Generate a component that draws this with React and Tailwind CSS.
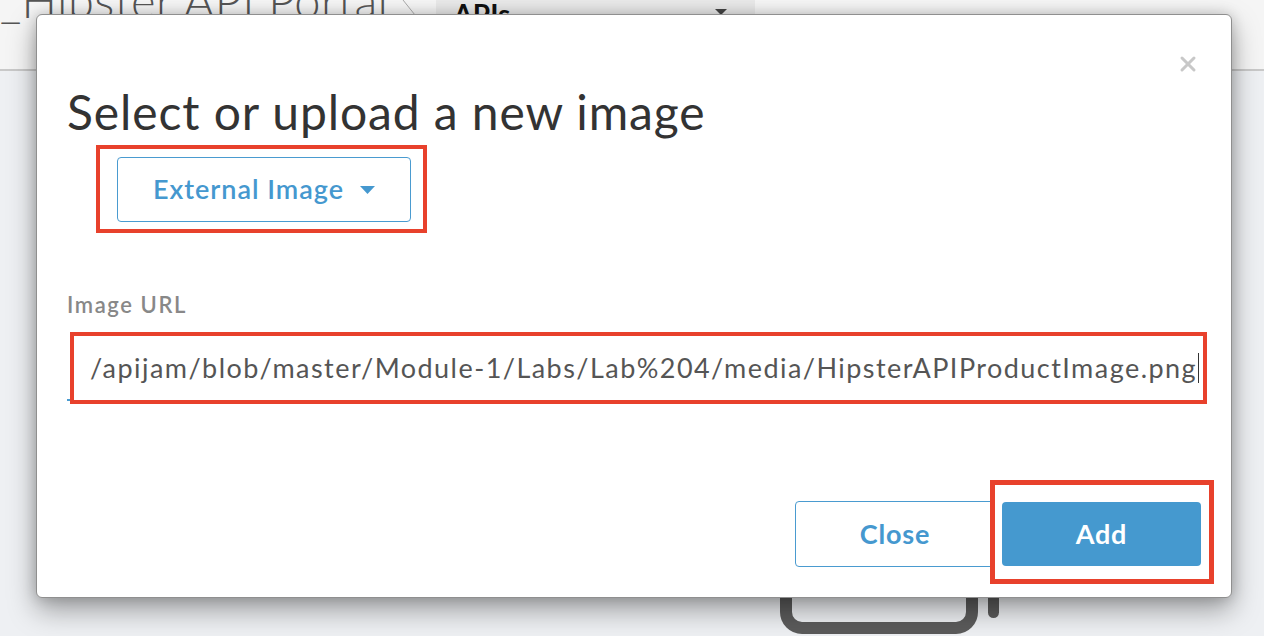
import { X } from "lucide-react";

export default function App() {
  return (
    <div className="relative h-[636px] w-[1264px] overflow-hidden bg-[#eef0f3] font-['Lato','Liberation_Sans',sans-serif]">
      {/* page behind the dialog */}
      <header className="flex h-[71px] items-start border-b-2 border-[#c9c9c9] bg-[#f5f5f5]">
        <div className="mt-[-28px] text-[47px] font-light leading-[56px] tracking-[0.4px] text-[#555]">
          _Hipster API Portal
        </div>
        <div className="ml-[14px] h-[16px] w-[14px]">
          <svg width="14" height="16" viewBox="0 0 14 16">
            <path d="M1 0 L13 15" stroke="#aaa" strokeWidth="1" fill="none" />
          </svg>
        </div>
        <div className="ml-[20px] flex h-[40px] w-[319px] items-start justify-between bg-[#e9e9e9] pl-[17px] pr-[28px]">
          <span className="mt-[-7px] text-[28px] font-bold text-[#111]">APIs</span>
          <svg className="mt-[9px]" width="12" height="6" viewBox="0 0 12 6">
            <path d="M0 0 H12 L6 6 Z" fill="#444" />
          </svg>
        </div>
      </header>

      <svg className="absolute left-[780px] top-[560px]" width="222" height="80" viewBox="0 0 222 80">
        <rect x="6" y="-20" width="186" height="88" rx="16" fill="none" stroke="#5b5b5b" strokeWidth="12" />
        <rect x="208" y="20" width="11" height="38" rx="5.5" fill="#5b5b5b" />
      </svg>

      {/* dialog */}
      <div className="absolute left-[36px] top-[14px] flex h-[584px] w-[1196px] flex-col rounded-[6px] border border-[#8f8f8f] bg-white pl-[30px] shadow-[0_12px_28px_rgba(0,0,0,0.35),0_0_14px_rgba(0,0,0,0.18)]">
        <button className="absolute right-[31px] top-[37px] text-[#c8c8c8]">
          <X size={24} strokeWidth={3} />
        </button>

        <h1 className="mt-[70px] text-[48px] font-normal leading-[53px] tracking-[0.9px] text-[#333]">
          Select or upload a new image
        </h1>

        <div className="ml-[29px] mt-[7px] w-[331px] border-4 border-[#e8412c] pb-[7px] pl-[17px] pt-[8px]">
          <button className="flex h-[65px] w-[294px] items-center justify-center gap-[16px] rounded-[4px] border border-[#4a9bd0] text-[27px] font-semibold tracking-[1px] text-[#4598cf]">
            External Image
            <svg width="15" height="8" viewBox="0 0 15 8">
              <path d="M0 0 H15 L7.5 8 Z" fill="#4598cf" />
            </svg>
          </button>
        </div>

        <label className="mt-[60px] text-[22px] font-semibold leading-[24px] tracking-[1.6px] text-[#888]">
          Image URL
        </label>

        <div className="relative mt-[15px]">
          <div className="absolute bottom-[3px] left-0 h-[2px] w-[12px] bg-[#4a9bd0]" />
          <div className="relative ml-[3px] flex h-[72px] w-[1137px] items-center border-4 border-[#e8412c] bg-white pl-[16px]">
            <span className="whitespace-nowrap text-[27px] leading-[1.2] tracking-[1.45px] text-[#555]">
              /apijam/blob/master/Module-1/Labs/Lab%204/media/HipsterAPIProductImage.png
            </span>
            <span className="ml-[1px] h-[30px] w-[1px] shrink-0 bg-[#333]" />
          </div>
        </div>

        <div className="mt-auto flex justify-end pb-[13px] pr-[17px]">
          <button className="mt-[21px] h-[66px] w-[200px] rounded-[4px] border border-[#4a9bd0] text-[27px] font-bold tracking-[0.8px] text-[#4598cf]">
            Close
          </button>
          <div className="relative z-10 ml-[-5px] border-[5px] border-[#e8412c] bg-white pb-[13px] pl-[7px] pr-[8px] pt-[17px]">
            <button className="h-[64px] w-[199px] rounded-[4px] bg-[#4599cf] text-[27px] font-bold tracking-[0.8px] text-white">
              Add
            </button>
          </div>
        </div>
      </div>
    </div>
  );
}
